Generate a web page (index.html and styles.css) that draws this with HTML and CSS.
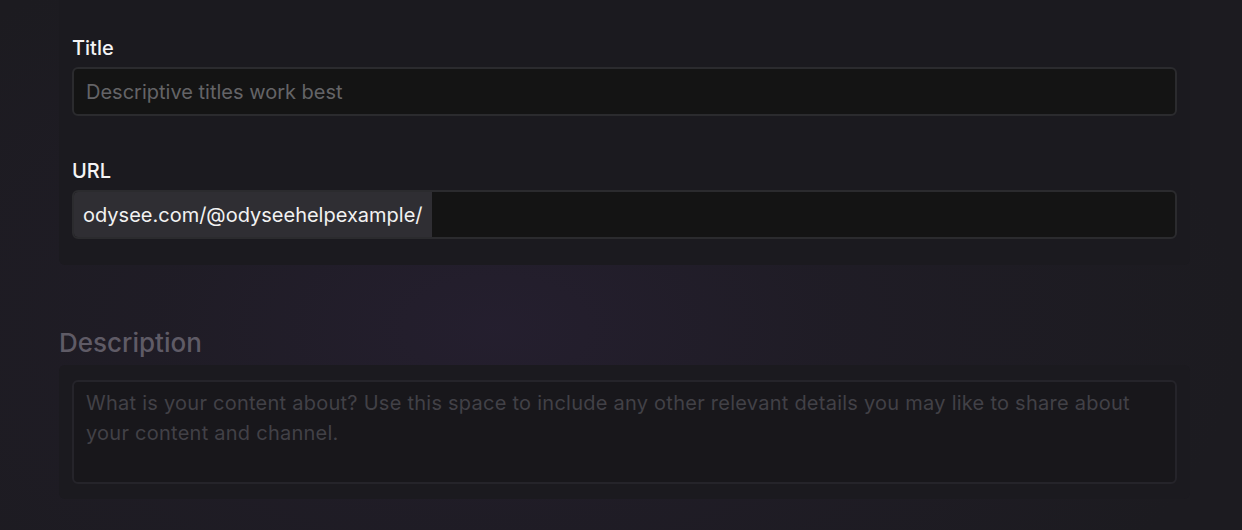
FILE: index.html
```html
<!DOCTYPE html>
<html>
<head>
<meta charset="utf-8">
<link rel="stylesheet" href="styles.css">
</head>
<body>
<div class="page">
  <section class="card card-top">
    <div class="field">
      <label class="label">Title</label>
      <div class="input"><span class="placeholder">Descriptive titles work best</span></div>
    </div>
    <div class="field field-url">
      <label class="label">URL</label>
      <div class="input input-url">
        <span class="prefix">odysee.com/@odyseehelpexample/</span>
        <span class="url-rest"></span>
      </div>
    </div>
  </section>

  <div class="dimmed">
    <h2 class="section-title">Description</h2>
    <section class="card card-desc">
      <div class="textarea"><span class="placeholder">What is your content about? Use this space to include any other relevant details you may like to share about your content and channel.</span></div>
    </section>
  </div>
</div>
</body>
</html>
```

FILE: styles.css
```css
html, body {
  margin: 0;
  padding: 0;
  height: 100%;
}
body {
  font-family: Inter, "Noto Sans", "Liberation Sans", sans-serif;
  background:
    radial-gradient(ellipse 60% 80% at 40% 62%, rgba(42, 33, 56, 0.6) 0%, rgba(36, 30, 46, 0.4) 45%, rgba(29, 28, 33, 0) 100%),
    #1c1b20;
  color: #fff;
  overflow: hidden;
}
.page {
  width: 1131px;
  margin-left: 59px;
  margin-top: -30px;
}
.card {
  background: #1b1a1f;
  border-radius: 6px;
  padding: 0 13px;
}
.card-top {
  padding-top: 66px;
  padding-bottom: 26px;
}
.field {
  display: flex;
  flex-direction: column;
}
.field-url {
  margin-top: 43px;
}
.label {
  font-size: 20px;
  line-height: 24px;
  font-weight: 500;
  margin-bottom: 7px;
  color: #f4f4f5;
}
.input {
  height: 49px;
  box-sizing: border-box;
  border: 2px solid #2b2b2e;
  border-radius: 6px;
  background: #141414;
  display: flex;
  align-items: center;
  padding: 0 12px;
}
.placeholder {
  font-size: 20px;
  color: #646467;
}
.input-url {
  padding: 0;
  overflow: hidden;
  align-items: stretch;
}
.prefix {
  display: flex;
  align-items: center;
  background: #2f2e33;
  padding: 0 9px 0 9px;
  font-size: 20px;
  color: #f2f2f2;
}
.url-rest {
  flex: 1;
}
.dimmed {
  margin-top: 62px;
}
.section-title {
  margin: 0 0 6px 0;
  font-size: 26px;
  line-height: 32px;
  font-weight: 500;
  color: #5f5b66;
}
.card-desc {
  background: #1b1a1f;
  padding-top: 15px;
  padding-bottom: 15px;
}
.textarea {
  height: 104px;
  box-sizing: border-box;
  border: 2px solid #25242a;
  border-radius: 6px;
  background: #18171b;
  padding: 7px 12px;
  line-height: 29px;
  letter-spacing: 0.25px;
}
.textarea .placeholder {
  color: #424147;
}
```
